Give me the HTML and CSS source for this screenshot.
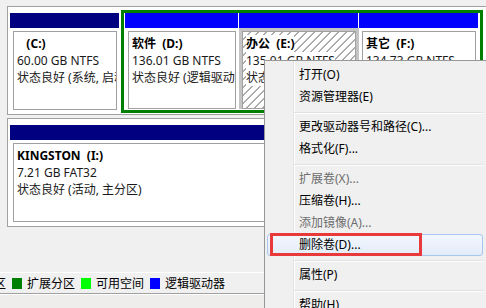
FILE: index.html
```html
<!DOCTYPE html>
<html lang="zh-CN">
<head>
  <meta charset="UTF-8">
  <title>磁盘管理</title>
  <link rel="stylesheet" href="styles.css">
</head>
<body>

  <div class="disks">
    <div class="disk">
      <div class="disk-label"></div>
      <div class="parts">
        <div class="part c">
          <div class="bar primary"></div>
          <div class="body">
            <div class="box tall">
              <p class="name">   (C:)</p>
              <p>60.00 GB NTFS</p>
              <p>状态良好 (系统, 启动, 页面文件, 故障转储, 主分区)</p>
            </div>
          </div>
        </div>
        <div class="extended">
          <div class="part d">
            <div class="bar logical"></div>
            <div class="body">
              <div class="box">
                <p class="name">软件  (D:)</p>
                <p>136.01 GB NTFS</p>
                <p>状态良好 (逻辑驱动器)</p>
              </div>
            </div>
          </div>
          <div class="part e sel">
            <div class="bar logical"></div>
            <div class="body">
              <div class="box">
                <p class="name">办公  (E:)</p>
                <p>135.01 GB NTFS</p>
                <p>状态良好 (逻辑驱动器)</p>
              </div>
            </div>
          </div>
          <div class="part f">
            <div class="bar logical"></div>
            <div class="body">
              <div class="box">
                <p class="name">其它  (F:)</p>
                <p>134.73 GB NTFS</p>
                <p>状态良好 (逻辑驱动器)</p>
              </div>
            </div>
          </div>
        </div>
      </div>
    </div>

    <div class="disk">
      <div class="disk-label"></div>
      <div class="parts">
        <div class="part usb">
          <div class="bar primary"></div>
          <div class="body">
            <div class="box tall">
              <p class="name">KINGSTON  (I:)</p>
              <p>7.21 GB FAT32</p>
              <p>状态良好 (活动, 主分区)</p>
            </div>
          </div>
        </div>
      </div>
    </div>
  </div>

  <div class="legend">
    <span class="txt cut">主分区</span>
    <span class="sw ext"></span><span class="txt">扩展分区</span>
    <span class="sw free"></span><span class="txt">可用空间</span>
    <span class="sw logic"></span><span class="txt">逻辑驱动器</span>
  </div>
  <div class="status"></div>

  <div class="menu">
    <div class="item">打开(O)</div>
    <div class="item">资源管理器(E)</div>
    <div class="sep"></div>
    <div class="item">更改驱动器号和路径(C)...</div>
    <div class="item">格式化(F)...</div>
    <div class="sep"></div>
    <div class="item off">扩展卷(X)...</div>
    <div class="item">压缩卷(H)...</div>
    <div class="item off">添加镜像(A)...</div>
    <div class="item hot">删除卷(D)...</div>
    <div class="sep"></div>
    <div class="item">属性(P)</div>
    <div class="sep"></div>
    <div class="item">帮助(H)</div>
  </div>

  <div class="mark"></div>

</body>
</html>
```

FILE: styles.css
```css
* {
  box-sizing: border-box;
}

body {
  margin: 0;
  width: 486px;
  height: 308px;
  overflow: hidden;
  position: relative;
  background: #f0f0f0;
  font-family: "Noto Sans", "Noto Sans CJK SC", sans-serif;
  font-size: 12px;
  color: #000;
}

p {
  margin: 0;
}

/* disk rows */
.disks {
  height: 272px;
  padding-top: 6px;
}

.disk {
  display: flex;
  height: 109px;
  margin-bottom: 3px;
}

.disk-label {
  width: 8px;
  border-right: 1px solid #a0a0a0;
}

.parts {
  flex: 1;
  display: flex;
  align-items: flex-start;
  background: #fff;
  border-top: 1px solid #a0a0a0;
  border-bottom: 1px solid #a0a0a0;
  padding: 3px 0 0 2px;
}

.part {
  display: flex;
  flex-direction: column;
}

.part.c {
  width: 110px;
  margin: 3px 1px 0 0;
}

.part.usb {
  width: 470px;
  margin-top: 3px;
}

.part.d {
  width: 114px;
}

.part.e,
.part.f {
  width: 120px;
}

.bar {
  height: 15px;
  margin-right: 1px;
}

.bar.primary {
  background: #000080;
}

.bar.logical {
  background: #0000ff;
}

.body {
  padding: 3px 3px 0;
}

.box {
  height: 78px;
  background: #fff;
  border: 1px solid #a0a0a0;
  padding: 3px;
  overflow: hidden;
  white-space: nowrap;
  line-height: 17px;
  color: #1a1a1a;
}

.box.tall {
  height: 79px;
}

.name {
  font-weight: bold;
  white-space: pre;
  color: #000;
}

.extended {
  display: flex;
  width: 362px;
  height: 103px;
  border: 3px solid #008000;
  padding: 0 1px;
}

/* selected volume */
.sel .body {
  background: #c4c4c4;
}

.sel .box {
  background: repeating-linear-gradient(135deg, #fff 0 4.6px, #ababab 4.6px 5.66px);
}

.sel .box p {
  width: max-content;
  background: #fff;
}

/* legend */
.legend {
  height: 21px;
  border-top: 1px solid #fff;
  display: flex;
  align-items: center;
}

.txt.cut {
  margin-left: -30px;
}

.sw {
  width: 10px;
  height: 11px;
  margin: 0 5px 0 6px;
}

.sw.ext {
  background: #008000;
}

.sw.free {
  background: #00ff00;
}

.sw.logic {
  background: #0000ff;
}

.status {
  height: 15px;
  border-top: 1px solid #a0a0a0;
  box-shadow: inset 0 1px #fff;
  background: #efedec;
}

/* context menu */
.menu {
  position: absolute;
  left: 264px;
  top: 60px;
  width: 240px;
  height: 260px;
  background: #f0f0f0;
  border: 1px solid #979797;
  padding: 3px 2px;
}

.menu::before {
  content: "";
  position: absolute;
  left: 28px;
  top: 0;
  bottom: 0;
  width: 1px;
  background: #e2e3e3;
  box-shadow: 1px 0 #fff;
}

.item {
  position: relative;
  width: 216px;
  height: 22px;
  line-height: 22px;
  padding-left: 32px;
  white-space: nowrap;
}

.item.off {
  color: #6d6d6d;
}

.item.hot {
  border: 1px solid #a8c6ee;
  border-radius: 3px;
  background: linear-gradient(#f3f7fd, #e3ecf9);
  padding-left: 31px;
  line-height: 20px;
}

.sep {
  position: relative;
  width: 189px;
  height: 2px;
  margin: 4px 0 2px 27px;
  border-top: 1px solid #e0e0e0;
  border-bottom: 1px solid #fff;
}

.mark {
  position: absolute;
  left: 270px;
  top: 233px;
  width: 152px;
  height: 23px;
  border: 3px solid #e83a3a;
}
```
